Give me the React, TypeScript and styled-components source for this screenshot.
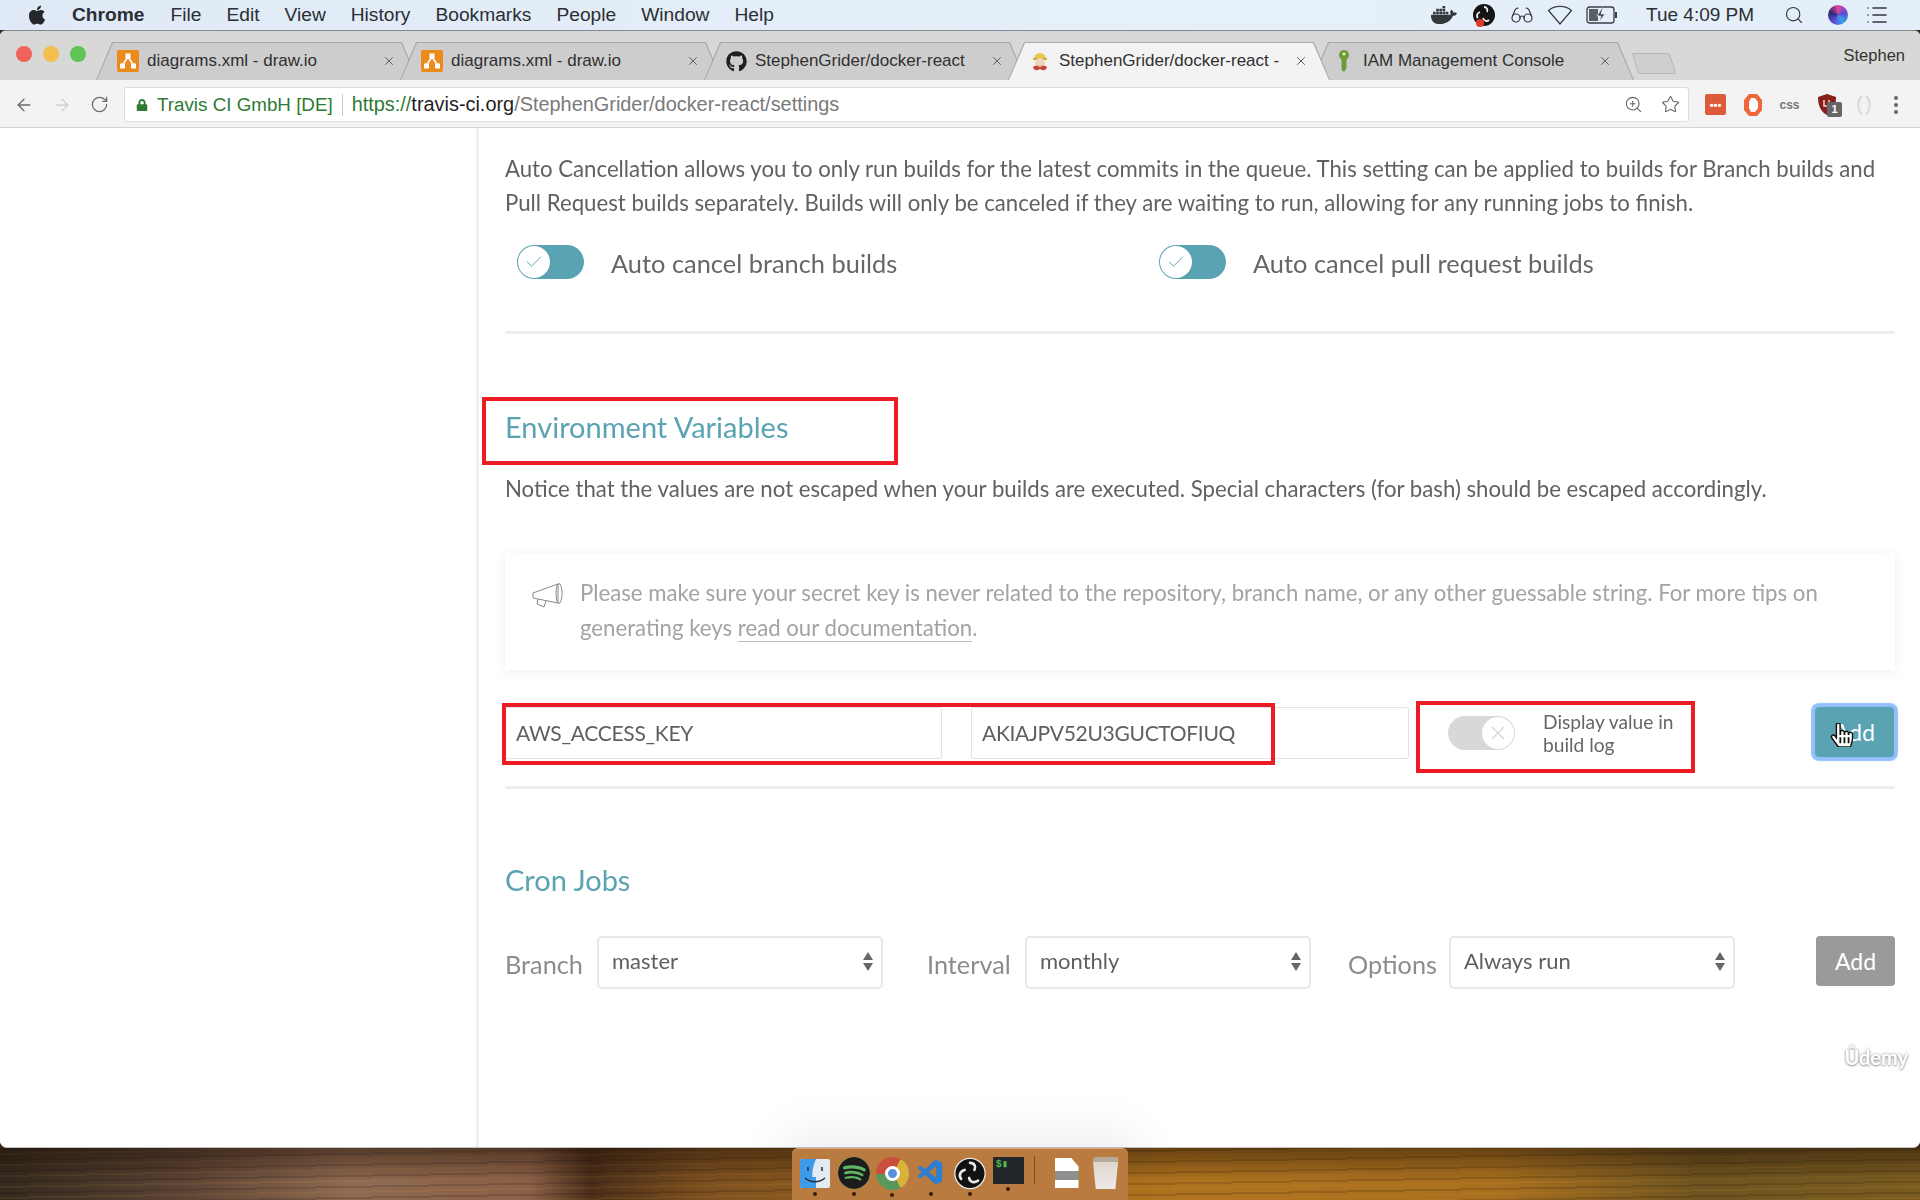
import React from "react";
import styled, { createGlobalStyle } from "styled-components";
import { ArrowLeft, ArrowRight, Check, Glasses, List, RotateCw, Search, Star, X, ZoomIn } from "lucide-react";
import { FaApple, FaDocker, FaGithub, FaLock, FaSpotify, FaHandPointer } from "react-icons/fa";
import { VscVscode } from "react-icons/vsc";

const Global = createGlobalStyle`
  html, body { margin: 0; padding: 0; background: #3a2412; }
  * { box-sizing: border-box; }
`;

const Screen = styled.div`
  width: 1920px; height: 1200px; overflow: hidden;
  display: flex; flex-direction: column;
  font-family: "Lato", "Liberation Sans", sans-serif;
  filter: blur(0.35px);
`;

/* mac menu bar */
const MenuBar = styled.div`
  height: 30px; flex: none; padding: 0 0 0 26px;
  display: flex; align-items: center;
  background: linear-gradient(90deg, #dfeaf6, #e6f0f9 60%, #e4eef8);
  font: 19.200px "Liberation Sans", Arial, sans-serif; color: #2b2f33;
`;
const MenuApple = styled.span` display: flex; width: 46px; font-size: 22px; color: #25282b; `;
const MenuItem = styled.span<{ $bold?: boolean }>`
  margin-right: ${(p) => (p.$bold ? 26 : 25)}px; font-weight: ${(p) => (p.$bold ? 700 : 400)};
`;
const StatusArea = styled.div`
  margin-left: auto; width: 496px; flex: none;
  display: flex; align-items: center;
`;
const StatusSlot = styled.span<{ $w: number }>`
  width: ${(p) => p.$w}px; flex: none; display: flex; justify-content: center; align-items: center;
`;
const Clock = styled.span` width: 148px; flex: none; padding-left: 22px; font-size: 19px; white-space: nowrap; `;
const Siri = styled.span`
  width: 20px; height: 20px; border-radius: 50%;
  background: conic-gradient(#e0479e, #5b4bd6, #36a4e8, #5b4bd6, #2c2a6e, #e0479e);
`;

/* browser window */
const BrowserWindow = styled.div`
  flex: 1; min-height: 0; display: flex; flex-direction: column;
  background: #fff; border-radius: 6px 6px 7px 7px; overflow: hidden;
  border-top: 1px solid #7f8a94; border-bottom: 1px solid #c4c4c4;
`;
const TabStrip = styled.div`
  height: 49px; flex: none; padding-top: 11px;
  display: flex; align-items: flex-end;
  background: #d8d8d6;
`;
const Lights = styled.div` width: 96px; height: 100%; flex: none; padding: 4px 0 0 16px; display: flex; gap: 11px; `;
const Light = styled.span<{ $c: string }>`
  width: 16px; height: 16px; border-radius: 50%; background: ${(p) => p.$c};
`;
const Tab = styled.div<{ $active?: boolean }>`
  position: relative; width: 322px; height: 38px; margin-right: -18px; flex: none;
  padding: 0 22px 0 21px;
  display: flex; align-items: center; gap: 8px;
  font: 17px "Liberation Sans", Arial, sans-serif; color: #303030;
  z-index: ${(p) => (p.$active ? 2 : 1)};
  &::before, &::after {
    content: ""; position: absolute; z-index: -1;
    clip-path: polygon(0 100%, 16px 0, calc(100% - 16px) 0, 100% 100%);
  }
  &::before { inset: 0; background: #a9a9a9; }
  &::after { inset: 1px 1px 0 1px; background: ${(p) => (p.$active ? "#f3f3f3" : "#cdcdcd")}; }
`;
const TabIcon = styled.span` width: 22px; height: 22px; flex: none; display: flex; align-items: center; justify-content: center; `;
const TabTitle = styled.span`
  white-space: nowrap; flex: 1;
`;
const TabClose = styled.span` flex: none; display: flex; color: #555; `;
const NewTab = styled.span`
  width: 38px; height: 21px; flex: none; margin: 0 0 6px 19px;
  background: #cfcfcf; border: 1px solid #b5b5b5;
  transform: skewX(18deg); border-radius: 2px;
`;
const Profile = styled.span`
  margin: 0 15px 15px auto; font: 16.500px "Liberation Sans", Arial, sans-serif; color: #333;
`;

const Toolbar = styled.div`
  height: 48px; flex: none; padding: 7px 0 5px 14px;
  display: flex; align-items: center;
  background: #f3f3f3; border-bottom: 1px solid #d4d4d4;
`;
const NavButton = styled.span<{ $dim?: boolean }>`
  width: 38px; flex: none; display: flex; color: ${(p) => (p.$dim ? "#cfcfcf" : "#6c6c6c")};
`;
const Omnibox = styled.div`
  width: 1565px; height: 35px; margin-left: -4px; padding: 0 8px 0 11px;
  display: flex; align-items: center;
  background: #fff; border: 1px solid #dcdcdc; border-radius: 3px;
  font: 19.900px "Liberation Sans", Arial, sans-serif; color: #7a7a7a;
`;
const Secure = styled.span` color: #2f7a33; margin-left: 9px; font-size: 18.800px; `;
const UrlSep = styled.span` width: 1px; height: 22px; background: #c9c9c9; margin: 0 9px; `;
const UrlScheme = styled.span` color: #2f7a33; `;
const UrlHost = styled.span` color: #1f1f1f; `;
const OmniIcons = styled.span` margin-left: auto; display: flex; gap: 18px; color: #666; `;
const Extensions = styled.div` display: flex; align-items: center; margin-left: 8px; `;
const ExtSlot = styled.span` position: relative; width: 37px; flex: none; display: flex; justify-content: center; align-items: center; `;
const ExtRed = styled.span`
  width: 21px; height: 21px; border-radius: 2px; background: #dd5b3a; color: #fff;
  display: flex; align-items: center; justify-content: center; font: 700 11px "Liberation Sans", sans-serif;
`;
const ExtCss = styled.span` font: 700 12px "Liberation Sans", sans-serif; color: #777; `;
const ExtBadge = styled.span`
  position: absolute; left: 19px; top: 9px; width: 15px; height: 15px; background: #666; color: #fff;
  border-radius: 2px; text-align: center; font: 700 11px/15px "Liberation Sans", sans-serif;
`;
const MenuDots = styled.span`
  display: flex; flex-direction: column; gap: 3px; margin-left: 12px;
  i { width: 4px; height: 4px; border-radius: 50%; background: #666; display: block; }
`;

/* travis page */
const Page = styled.div` flex: 1; min-height: 0; display: flex; background: #fff; `;
const Sidebar = styled.aside` width: 479px; flex: none; border-right: 3px solid #eeeeee; `;
const Content = styled.main`
  position: relative; flex: 1; padding: 24px 25px 0 26px;
  color: #666;
`;
const Para = styled.p<{ $top?: number }>`
  margin: ${(p) => p.$top ?? 0}px 0 0; font-size: 22.200px; line-height: 34px; color: #616161;
  white-space: nowrap;
`;
const ToggleRow = styled.div`
  margin-top: 25px; padding-left: 12px; display: flex; align-items: center;
`;
const ToggleCell = styled.div`
  width: 642px; flex: none; display: flex; align-items: center; gap: 27px;
  font-size: 25.400px; color: #666;
`;
const ToggleLabel = styled.span` padding-top: 2px; `;
const Track = styled.span<{ $on?: boolean }>`
  width: 67px; height: 34px; flex: none; border-radius: 17px; padding: 1px;
  display: flex; justify-content: ${(p) => (p.$on ? "flex-start" : "flex-end")};
  background: ${(p) => (p.$on ? "#5aa3b2" : "#d8d8d8")};
`;
const Knob = styled.span<{ $on?: boolean }>`
  width: 32px; height: 32px; border-radius: 50%; background: #fff;
  display: flex; align-items: center; justify-content: center;
  color: ${(p) => (p.$on ? "#5aa3b2" : "#d0d0d0")};
`;
const Rule = styled.hr<{ $top: number }>`
  height: 3px; margin: ${(p) => p.$top}px 0 0; border: 0; background: #eeeeee;
`;
const Heading = styled.h2<{ $top: number }>`
  margin: ${(p) => p.$top}px 0 0; font-size: 29px; line-height: 40px; font-weight: 400; color: #5aa3b2;
`;
const NoticeBox = styled.div`
  margin-top: 47px; height: 117px; padding: 22px 20px 0 27px;
  display: flex; gap: 17px;
  background: #fff; box-shadow: 0 2px 12px rgba(0,0,0,.07);
`;
const NoticeIcon = styled.svg` width: 31px; height: 28px; flex: none; margin-top: 7px; `;
const NoticeText = styled.div`
  font-size: 22.200px; line-height: 35px; color: #a3a3a3; white-space: nowrap;
`;
const DocLink = styled.a`
  color: inherit; text-decoration: none; border-bottom: 1px solid #bdbdbd;
`;
const EnvRow = styled.div` margin-top: 37px; display: flex; align-items: flex-start; `;
const Field = styled.div<{ $w: number }>`
  width: ${(p) => p.$w}px; height: 52px; flex: none; padding: 0 0 2px 10px; margin-right: 29px;
  display: flex; align-items: center;
  border: 1px solid #e3e3e3; border-radius: 2px;
  font-size: 21px; letter-spacing: -0.300px; color: #5f5f5f;
`;
const DisplayToggle = styled.div`
  display: flex; align-items: center; gap: 28px; margin: 3px 0 0 10px;
  font-size: 19.200px; line-height: 23px; color: #666;
`;
const AddButton = styled.button<{ $focus?: boolean }>`
  position: relative; width: 79px; height: 50px; margin-left: auto; flex: none;
  margin-right: ${(p) => (p.$focus ? "1px" : "0")};
  border: 0; border-radius: 4px; color: #fff; font: 23px "Lato", sans-serif;
  background: ${(p) => (p.$focus ? "#5aa3b2" : "#9a9a9a")};
  box-shadow: ${(p) => (p.$focus ? "0 0 1px 4px #93bffa" : "none")};
`;
const Pointer = styled.span`
  position: absolute; left: 15px; top: 16px; display: flex;
  svg { stroke: #111; stroke-width: 30px; }
`;
const CronRow = styled.div`
  margin-top: 36px; display: grid; grid-template-columns: 422px 421px 467px 80px;
`;
const CronGroup = styled.div` display: flex; align-items: center; `;
const CronLabel = styled.label<{ $w: number }>`
  width: ${(p) => p.$w}px; flex: none; font-size: 25.300px; color: #8c8c8c; padding-top: 3px;
`;
const Select = styled.div`
  width: 286px; height: 53px; flex: none; padding: 0 8px 5px 13px;
  display: flex; align-items: center; justify-content: space-between;
  border: 2px solid #e8e8e8; border-radius: 5px;
  font-size: 22px; color: #5f5f5f;
`;
const SelectArrows = styled.span`
  display: flex; flex-direction: column; gap: 3px; padding-top: 3px;
  &::before, &::after { content: ""; width: 0; height: 0; border-left: 5px solid transparent; border-right: 5px solid transparent; }
  &::before { border-bottom: 8px solid #666; }
  &::after { border-top: 8px solid #666; }
`;
const Mark = styled.div<{ $x: number; $y: number; $w: number; $h: number }>`
  position: absolute; border: 4px solid #ed1c24; pointer-events: none;
  left: ${(p) => p.$x}px; top: ${(p) => p.$y}px; width: ${(p) => p.$w}px; height: ${(p) => p.$h}px;
`;
const Watermark = styled.span`
  position: absolute; right: 12px; top: 917px; font: 700 20px "Lato", sans-serif; color: #fff;
  text-shadow: 0 0 3px #999, 0 1px 2px #aaa;
`;

/* dock + wallpaper */
const Wallpaper = styled.div`
  position: relative; z-index: 3; height: 52px; flex: none;
  display: flex; justify-content: center;
  background:
    linear-gradient(180deg, rgba(30,15,5,.5), rgba(30,15,5,0) 65%),
    repeating-linear-gradient(179deg, rgba(30,12,2,.16) 0 2px, transparent 2px 5px, rgba(230,150,50,.09) 5px 7px, transparent 7px 11px),
    linear-gradient(90deg, #33291f, #5a4334 180px, #8f6a52 350px, #8a6048 530px, #4a2e1a 590px, #7a4f20 700px, #8a5a20 790px, #b0741f 1130px, #a8701f 1500px, #6e5420 1700px, #7a5c20 1920px);
`;
const Dock = styled.div`
  width: 336px; height: 52px; padding-left: 4px; display: flex;
  background: #b97b3f; border-radius: 6px 6px 0 0; border-top: 1px solid #d8a878;
  box-shadow: 0 -6px 50px 10px rgba(0,0,0,.07);
`;
const DockItem = styled.div`
  width: 38.600px; flex: none; padding-top: 8px;
  display: flex; flex-direction: column; align-items: center; gap: 3px;
`;
const DockDot = styled.i`
  width: 4px; height: 4px; border-radius: 50%; background: #3a1c08;
`;
const DockIcon = styled.span`
  width: 32px; height: 32px; display: flex; align-items: center; justify-content: center; flex: none;
`;
const SpotifyDisc = styled.span`
  width: 32px; height: 32px; border-radius: 50%; background: #5fb765; color: #1c1c1c;
  display: flex; align-items: center; justify-content: center; overflow: hidden;
`;
const ChromeDisc = styled.span`
  position: relative; width: 33px; height: 33px; border-radius: 50%;
  background: conic-gradient(from 30deg, #d9b23c 0 120deg, #58985a 120deg 240deg, #c9503f 240deg 360deg);
  &::after {
    content: ""; position: absolute; inset: 9px; border-radius: 50%; background: #5b8fe0; border: 3px solid #fff;
  }
`;
const TerminalTile = styled.span`
  width: 31px; height: 27px; background: #22252a; color: #4fbf4f; padding: 1px 0 0 3px;
  font: 700 10px "Liberation Mono", monospace; border-radius: 1px;
`;
const DockSep = styled.span` width: 1px; height: 28px; margin: 7px 20px 0 6px; background: #7d4e22; flex: none; `;
const DockFile = styled.span`
  width: 24px; height: 30px; margin-top: 9px; flex: none;
  background: linear-gradient(180deg, #fff 45%, #8f8f8f 45% 75%, #fff 75%);
  clip-path: polygon(0 0, 70% 0, 100% 28%, 100% 100%, 0 100%);
`;
const DockTrash = styled.span`
  width: 26px; height: 32px; margin: 8px 0 0 14px; flex: none;
  background: linear-gradient(180deg, #b8a898 0 16%, #ded7d0 16%, #efeae6);
  clip-path: polygon(0 0, 100% 0, 88% 100%, 12% 100%);
  border-radius: 3px;
`;

const DrawIo = () => (
  <svg width="22" height="22" viewBox="0 0 22 22">
    <rect width="22" height="22" rx="2" fill="#ee8a1d" />
    <path d="M11 7 L5.500 15 M11 7 L16.500 15" stroke="#fff" strokeWidth="1.600" />
    <rect x="8.500" y="3.500" width="5" height="5" fill="#fff" />
    <rect x="3" y="13.500" width="5" height="5" fill="#fff" />
    <rect x="14" y="13.500" width="5" height="5" fill="#fff" />
  </svg>
);

const TravisMascot = () => (
  <svg width="20" height="22" viewBox="0 0 20 22">
    <path d="M4 9a6 6 0 0 1 12 0z" fill="#e3c84a" />
    <rect x="3" y="8" width="14" height="2" fill="#c9a93a" />
    <circle cx="10" cy="13" r="5" fill="#ecd6c0" />
    <path d="M3 17c3-2 5-1 7 0 2-1 4-2 7 0-1 4-4 4-7 2-3 2-6 2-7-2z" fill="#c8463c" />
  </svg>
);

const GreenKey = () => (
  <svg width="14" height="24" viewBox="0 0 14 24">
    <path d="M7 1a5 5 0 0 1 2.500 9.300V19l-2.500 4-2.500-2v-10.700A5 5 0 0 1 7 1z" fill="#6f9a3a" />
    <circle cx="7" cy="5" r="1.500" fill="#e6efd8" />
  </svg>
);

const WifiFan = () => (
  <svg width="26" height="22" viewBox="0 0 26 22" fill="none" stroke="#3a3f44" strokeWidth="1.300">
    <path d="M1.500 6.500C7.500 1 18.500 1 24.500 6.500L13 20z" />
  </svg>
);

const BatteryBolt = () => (
  <svg width="32" height="20" viewBox="0 0 32 20" fill="none">
    <rect x="1" y="2" width="27" height="16" rx="2.500" stroke="#3a3f44" strokeWidth="1.300" />
    <rect x="3" y="4" width="9" height="12" fill="#5a5f64" />
    <rect x="29" y="7" width="2" height="6" fill="#3a3f44" />
    <path d="M16 3l-5 8h4l-2 6 6-8h-4l2-6z" fill="#3a3f44" stroke="#e6f0f9" strokeWidth=".8" />
  </svg>
);

const ObsMark = ({ size }: { size: number }) => (
  <svg width={size} height={size} viewBox="0 0 36 36">
    <circle cx="18" cy="18" r="17" fill="#111" stroke="#e9e4de" strokeWidth="1.500" />
    <path d="M18 6c5 0 7 4 5 8M8 24c-3-4-1-9 4-10M27 26c-4 3-9 2-10-3" fill="none" stroke="#e8e8e8" strokeWidth="3" strokeLinecap="round" />
  </svg>
);

const ObsStatus = () => (
  <svg width="22" height="26" viewBox="0 0 22 26">
    <circle cx="11" cy="13" r="11" fill="#141414" />
    <path d="M11 5c3 0 4 3 3 5M5 16c-2-2-1-5 2-6M16 18c-2 2-5 1-6-2" fill="none" stroke="#eee" strokeWidth="1.800" />
    <circle cx="7" cy="21" r="4" fill="#e03a2a" />
  </svg>
);

const OperaStop = () => (
  <svg width="20" height="24" viewBox="0 0 20 24" fill="none">
    <path d="M6 1h8l5 6v10l-5 6H6L1 17V7z" fill="#f0663a" />
    <path d="M8 5h4l3 4v6l-3 4H8L6 15V9z" fill="#fff" />
  </svg>
);

const UblockShield = () => (
  <svg width="20" height="23" viewBox="0 0 20 23">
    <path d="M10 1l9 3c0 9-3 15-9 18C4 19 1 13 1 4z" fill="#8a1f1a" />
    <path d="M7 7v6h3M12 13V7" stroke="#e8d8d0" strokeWidth="1.500" fill="none" />
  </svg>
);

const GhostExt = () => (
  <svg width="20" height="24" viewBox="0 0 20 24" fill="none" stroke="#dcdcdc" strokeWidth="2.500">
    <path d="M12 3c5 4 5 14 0 18M8 3C3 7 3 17 8 21" />
  </svg>
);

const Finder = () => (
  <svg width="30" height="29" viewBox="0 0 30 29">
    <rect width="30" height="29" rx="2" fill="#e4eaf1" />
    <path d="M2 0h14c-3 7-4 12-3.500 18H16v11H2a2 2 0 0 1-2-2V2a2 2 0 0 1 2-2z" fill="#3d9bea" />
    <path d="M8 8v4M22 8v4" stroke="#1e2c40" strokeWidth="1.500" />
    <path d="M5 19c6 5 14 5 20 0" fill="none" stroke="#1e2c40" strokeWidth="1.300" />
  </svg>
);

const tabs = [
  { title: "diagrams.xml - draw.io", icon: <DrawIo /> },
  { title: "diagrams.xml - draw.io", icon: <DrawIo /> },
  { title: "StephenGrider/docker-react", icon: <FaGithub size={21} color="#1b1f23" /> },
  { title: "StephenGrider/docker-react -", icon: <TravisMascot />, active: true },
  { title: "IAM Management Console", icon: <GreenKey /> },
];

const menus = ["File", "Edit", "View", "History", "Bookmarks", "People", "Window", "Help"];

const Toggle = ({ on }: { on?: boolean }) => (
  <Track $on={on}>
    <Knob $on={on}>{on ? <Check size={20} strokeWidth={1.2} /> : <X size={22} strokeWidth={1.2} />}</Knob>
  </Track>
);

export default function App() {
  return (
    <Screen>
      <Global />
      <MenuBar>
        <MenuApple><FaApple /></MenuApple>
        <MenuItem $bold>Chrome</MenuItem>
        {menus.map((m) => <MenuItem key={m}>{m}</MenuItem>)}
        <StatusArea>
          <StatusSlot $w={40}><FaDocker size={26} color="#33383c" /></StatusSlot>
          <StatusSlot $w={40}><ObsStatus /></StatusSlot>
          <StatusSlot $w={36}><Glasses size={24} strokeWidth={1.2} color="#33383c" /></StatusSlot>
          <StatusSlot $w={40}><WifiFan /></StatusSlot>
          <StatusSlot $w={44}><BatteryBolt /></StatusSlot>
          <Clock>Tue 4:09 PM</Clock>
          <StatusSlot $w={44}><Search size={20} strokeWidth={1.4} color="#33383c" /></StatusSlot>
          <StatusSlot $w={44}><Siri /></StatusSlot>
          <StatusSlot $w={34}><List size={24} strokeWidth={1.6} color="#33383c" /></StatusSlot>
        </StatusArea>
      </MenuBar>

      <BrowserWindow>
        <TabStrip>
          <Lights>
            <Light $c="#f0625a" />
            <Light $c="#f4bd4f" />
            <Light $c="#5fc454" />
          </Lights>
          {tabs.map((t, i) => (
            <Tab key={i} $active={t.active}>
              <TabIcon>{t.icon}</TabIcon>
              <TabTitle>{t.title}</TabTitle>
              <TabClose><X size={14} strokeWidth={1.6} /></TabClose>
            </Tab>
          ))}
          <NewTab />
          <Profile>Stephen</Profile>
        </TabStrip>

        <Toolbar>
          <NavButton><ArrowLeft size={20} strokeWidth={1.6} /></NavButton>
          <NavButton $dim><ArrowRight size={20} strokeWidth={1.6} /></NavButton>
          <NavButton><RotateCw size={19} strokeWidth={1.6} /></NavButton>
          <Omnibox>
            <FaLock size={12} color="#2f7a33" />
            <Secure>Travis CI GmbH [DE]</Secure>
            <UrlSep />
            <UrlScheme>https://</UrlScheme>
            <UrlHost>travis-ci.org</UrlHost>
            /StephenGrider/docker-react/settings
            <OmniIcons>
              <ZoomIn size={19} strokeWidth={1.4} />
              <Star size={19} strokeWidth={1.4} />
            </OmniIcons>
          </Omnibox>
          <Extensions>
            <ExtSlot><ExtRed>•••</ExtRed></ExtSlot>
            <ExtSlot><OperaStop /></ExtSlot>
            <ExtSlot><ExtCss>css</ExtCss></ExtSlot>
            <ExtSlot><UblockShield /><ExtBadge>1</ExtBadge></ExtSlot>
            <ExtSlot><GhostExt /></ExtSlot>
            <MenuDots><i /><i /><i /></MenuDots>
          </Extensions>
        </Toolbar>

        <Page>
          <Sidebar />
          <Content>
            <Para>Auto Cancellation allows you to only run builds for the latest commits in the queue. This setting can be applied to builds for Branch builds and</Para>
            <Para>Pull Request builds separately. Builds will only be canceled if they are waiting to run, allowing for any running jobs to finish.</Para>
            <ToggleRow>
              <ToggleCell><Toggle on /><ToggleLabel>Auto cancel branch builds</ToggleLabel></ToggleCell>
              <ToggleCell><Toggle on /><ToggleLabel>Auto cancel pull request builds</ToggleLabel></ToggleCell>
            </ToggleRow>
            <Rule $top={52} />
            <Heading $top={73}>Environment Variables</Heading>
            <Para $top={25}>Notice that the values are not escaped when your builds are executed. Special characters (for bash) should be escaped accordingly.</Para>
            <NoticeBox>
              <NoticeIcon viewBox="0 0 31 28" fill="none" stroke="#8a8a8a" strokeWidth="1">
                <path d="M1 11L26 2v19L1 16z" />
                <ellipse cx="27" cy="11.500" rx="3" ry="10" />
                <path d="M6 17l-1 5 7 3 2-6" />
              </NoticeIcon>
              <NoticeText>
                Please make sure your secret key is never related to the repository, branch name, or any other guessable string. For more tips on<br />
                generating keys <DocLink>read our documentation</DocLink>.
              </NoticeText>
            </NoticeBox>
            <EnvRow>
              <Field $w={437}>AWS_ACCESS_KEY</Field>
              <Field $w={438}>AKIAJPV52U3GUCTOFIUQ</Field>
              <DisplayToggle>
                <Toggle />
                <span>Display value in<br />build log</span>
              </DisplayToggle>
              <AddButton $focus>
                Add
                <Pointer><FaHandPointer size={24} color="#fff" /></Pointer>
              </AddButton>
            </EnvRow>
            <Rule $top={27} />
            <Heading $top={71}>Cron Jobs</Heading>
            <CronRow>
              <CronGroup>
                <CronLabel $w={92}>Branch</CronLabel>
                <Select>master<SelectArrows /></Select>
              </CronGroup>
              <CronGroup>
                <CronLabel $w={98}>Interval</CronLabel>
                <Select>monthly<SelectArrows /></Select>
              </CronGroup>
              <CronGroup>
                <CronLabel $w={101}>Options</CronLabel>
                <Select>Always run<SelectArrows /></Select>
              </CronGroup>
              <AddButton>Add</AddButton>
            </CronRow>
            <Mark $x={3} $y={269} $w={416} $h={68} />
            <Mark $x={23} $y={575} $w={773} $h={62} />
            <Mark $x={937} $y={573} $w={279} $h={72} />
            <Watermark>Ûdemy</Watermark>
          </Content>
        </Page>
      </BrowserWindow>

      <Wallpaper>
        <Dock>
          <DockItem><DockIcon><Finder /></DockIcon><DockDot /></DockItem>
          <DockItem><SpotifyDisc><FaSpotify size={34} /></SpotifyDisc><DockDot /></DockItem>
          <DockItem><ChromeDisc /><DockDot /></DockItem>
          <DockItem><DockIcon><VscVscode size={30} color="#2f7fd0" /></DockIcon><DockDot /></DockItem>
          <DockItem><DockIcon><ObsMark size={35} /></DockIcon><DockDot /></DockItem>
          <DockItem><TerminalTile>$▮</TerminalTile><DockDot /></DockItem>
          <DockSep />
          <DockFile />
          <DockTrash />
        </Dock>
      </Wallpaper>
    </Screen>
  );
}
